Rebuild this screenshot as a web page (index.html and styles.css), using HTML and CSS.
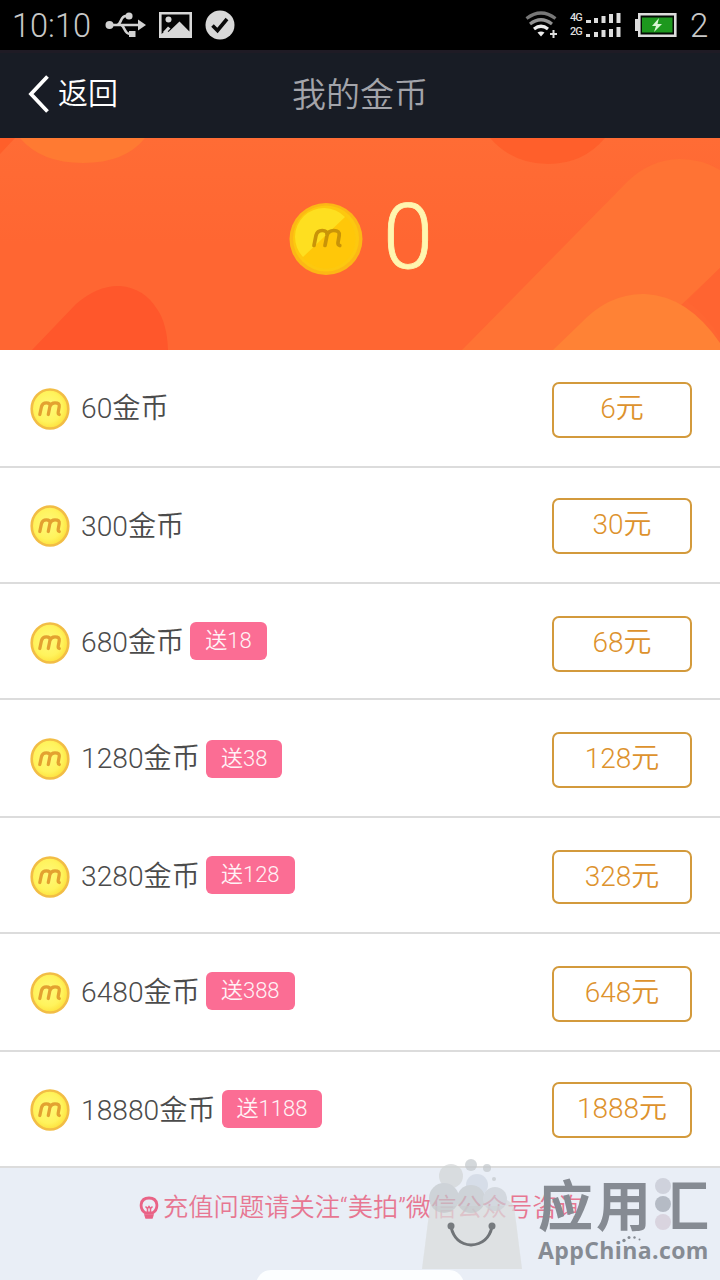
FILE: index.html
```html
<!DOCTYPE html>
<html lang="zh-CN">
<head>
<meta charset="utf-8">
<title>我的金币</title>
<link rel="stylesheet" href="styles.css">
</head>
<body>
<svg class="defs" width="0" height="0" aria-hidden="true">
  <defs>
    <radialGradient id="coin-fill" cx=".45" cy=".45" r=".55">
      <stop offset="0" stop-color="#fff97a"/>
      <stop offset=".7" stop-color="#fff35c"/>
      <stop offset="1" stop-color="#fde23e"/>
    </radialGradient>
    <symbol id="coin" viewBox="0 0 40 42">
      <ellipse cx="20" cy="21" rx="18.300" ry="19.500" fill="url(#coin-fill)" stroke="#f2bd45" stroke-width="2.600"/>
      <path d="M9.800 26.500L11.500 18.500Q12.500 14.800 16.300 14.800Q20.600 14.800 19.900 18.500L18.300 26.500M19.900 18.500Q21 14.800 25 14.800Q29.900 14.800 29.200 18.800L28.200 24.200Q28 26.200 29.300 26.500" fill="none" stroke="#e3a130" stroke-width="3.300" stroke-linecap="round" stroke-linejoin="round"/>
    </symbol>
  </defs>
</svg>
<div class="screen">
  <header class="status">
    <span class="clock">10:10</span>
    <svg class="usb" width="42" height="28" viewBox="0 0 42 28" fill="none" stroke="#d2d2d2" stroke-width="2.600">
      <path d="M5 14h29M12 14C17 13 15 5 21 5h4M16 14c4 1 3 9 9 9"/>
      <g fill="#d2d2d2" stroke="none"><circle cx="4.500" cy="14" r="4"/><circle cx="24" cy="5" r="3.600"/><path d="M33 8.500L41 14l-8 5.500zM24 20h6.500v6H24z"/></g>
    </svg>
    <svg class="photo" width="33" height="26" viewBox="0 0 33 26">
      <path d="M0 0h33v26H0z" fill="#d8d8d8"/><path d="M2.600 2.600h27.800v17L20.500 9.500 9.500 20l-2.500-2-4.400 4z" fill="#050505"/><path d="M4 20l5-5.500 2.500 2L8 20z" fill="#d8d8d8"/><circle cx="9.500" cy="7.500" r="3" fill="#d8d8d8"/>
    </svg>
    <svg class="check" width="30" height="30" viewBox="0 0 30 30"><circle cx="15" cy="15" r="14.500" fill="#d8d8d8"/><path d="M7.500 15.500l5 5L22 9" fill="none" stroke="#090909" stroke-width="3.600"/></svg>
    <svg class="wifi" width="34" height="28" viewBox="0 0 34 28" fill="none" stroke-width="3.200">
      <path d="M1.500 7.500q14.500-11 29 0" stroke="#777"/><path d="M5 13q11-8.500 22 0" stroke="#929292"/><path d="M9 18q7-5.500 14 0" stroke="#eee"/>
      <path d="M12.500 21.500q3.500-2 7 0L16 25.500z" fill="#eee" stroke="none"/><path d="M28.500 19v8M25 23h7" stroke="#ddd" stroke-width="2"/>
    </svg>
    <div class="signals">
      <div class="signal"><span>4G</span><svg width="35" height="12" viewBox="0 0 35 12" fill="#ddd"><path d="M0 8h5v3H0zM8 6h4v5H8zM15.500 4h4v7h-4zM23 2h4v9h-4zM30.500 1h4v10h-4z"/></svg></div>
      <div class="signal"><span>2G</span><svg width="35" height="12" viewBox="0 0 35 12" fill="#ddd"><path d="M0 8h4v3H0zM8 6h4v5H8zM15.500 4h4v7h-4zM23 3h4v8h-4zM30.500 1h4v10h-4z"/></svg></div>
    </div>
    <svg class="battery" width="42" height="24" viewBox="0 0 42 24"><path d="M0 6h4v12H0z" fill="#ddd"/><path d="M4.300 1.300h36v21.400h-36z" fill="#040a04" stroke="#ddd" stroke-width="2.600"/><path d="M7 4.500h30.500v15H7z" fill="#1d981e"/><path d="M24 5l-7 8h4l-2 6 8-8h-4.500z" fill="#d9f5d5"/></svg>
    <span class="level">2</span>
  </header>
  <nav class="nav">
    <svg class="back-icon" width="22" height="40" viewBox="0 0 22 40"><path d="M19.500 2.500L3 20l16.500 17.500" fill="none" stroke="#fff" stroke-width="3.800"/></svg>
    <span class="back">返回</span>
    <h1 class="title">我的金币</h1>
  </nav>
  <section class="hero">
    <svg class="hero-art" width="720" height="212" viewBox="0 0 720 212" aria-hidden="true">
      <path d="M0 0h15L0 16z" fill="#ff5f2a"/>
      <path d="M20 0h125q-20 25-62 25T20 0z" fill="#ff7a32"/>
      <path d="M490 0h115q-22 26-57 26T490 0z" fill="#ff5f2b"/>
      <path d="M462 212L628 43q22-21 51-22 23 0 41 11v98l-86 82z" fill="#ff7334"/>
      <path d="M553 212l27-26q29-31 65-30 43 2 75 49v7z" fill="#ff8235"/>
      <path d="M720 130l-33 33q22 16 33 37z" fill="#ff6431"/>
      <path d="M32 212l44-46q22-19 44-18 24 2 37 23 10 14 11 41z" fill="#ff572b"/>
    </svg>
    <div class="balance">
      <svg class="big-coin" width="74" height="74" viewBox="0 0 74 74">
        <ellipse cx="37" cy="37" rx="36.500" ry="36" fill="#fcb715"/>
        <circle cx="37" cy="36.500" r="33" fill="#fdc80f"/>
        <circle cx="37" cy="37" r="29.500" fill="#ffc709"/>
        <path d="M14 55A29 29 0 0 1 56 15z" fill="#fedf20"/>
        <path d="M25 43.500L27 33.500Q28.300 28.500 33.200 28.500Q38.800 28.500 38 33.500L36 43.500M38 33.500Q39.500 28.500 44.800 28.500Q51 28.500 50.200 33.500L49 40.500Q48.700 43 50.800 43.500" fill="none" stroke="#c99408" stroke-width="3.700" stroke-linecap="round" stroke-linejoin="round"/>
      </svg>
      <span class="amount">0</span>
    </div>
  </section>
  <main class="list">
    <div class="row tall"><svg class="coin"><use href="#coin"/></svg><span class="name">60金币</span><button class="price">6元</button></div>
    <div class="row raised"><svg class="coin"><use href="#coin"/></svg><span class="name">300金币</span><button class="price">30元</button></div>
    <div class="row"><svg class="coin"><use href="#coin"/></svg><span class="name">680金币</span><span class="bonus">送18</span><button class="price">68元</button></div>
    <div class="row tall"><svg class="coin"><use href="#coin"/></svg><span class="name">1280金币</span><span class="bonus low">送38</span><button class="price">128元</button></div>
    <div class="row"><svg class="coin"><use href="#coin"/></svg><span class="name">3280金币</span><span class="bonus">送128</span><button class="price short">328元</button></div>
    <div class="row tall"><svg class="coin"><use href="#coin"/></svg><span class="name">6480金币</span><span class="bonus">送388</span><button class="price">648元</button></div>
    <div class="row raised"><svg class="coin"><use href="#coin"/></svg><span class="name">18880金币</span><span class="bonus low">送1188</span><button class="price">1888元</button></div>
  </main>
  <footer class="footer">
    <div class="help">
      <svg width="20" height="25" viewBox="0 0 20 25" fill="none" stroke="#e96386"><path d="M6.500 17C0 13 .5 2 10 2s10 11 3.500 15z" stroke-width="2.800"/><path d="M6.500 10.500l2 2 1.500-2 1.500 2 2-2M8.500 13v4M11.500 13v4" stroke-width="1.500"/><path d="M6 19h8l-1 3H7z" fill="#e96386" stroke-width="1.500"/></svg>
      <span>充值问题请关注“美拍”微信公众号咨询</span>
    </div>
    <div class="sheet"></div>
    <div class="watermark">
      <svg class="bag" width="100" height="112" viewBox="0 0 100 112">
        <path d="M8 47h84l8 63H0z" fill="#d9dcdc" opacity=".75"/>
        <g fill="#c3c8cc" opacity=".7"><circle cx="29" cy="17" r="12" fill="#d2d5d6"/><circle cx="49" cy="6" r="6"/><circle cx="65" cy="9" r="4"/><circle cx="72" cy="20" r="2"/><circle cx="55" cy="26" r="11" fill="#cfd7e3"/><path d="M8 47q4-8 14-9h52q12 1 18 9z" fill="#d5d8da"/><circle cx="22" cy="39" r="15"/><circle cx="49" cy="40" r="14"/><circle cx="73" cy="40" r="12" fill="#cbd0d6"/></g>
        <path d="M29 68q4 17 20 18 17-1 21-18" fill="none" stroke="#707478" stroke-width="3"/><g fill="#777b7f"><circle cx="29" cy="67" r="3.500"/><circle cx="70" cy="67" r="3.500"/></g>
      </svg>
      <div class="brand">
        <div class="brand-cn"><span>应</span><span>用</span><span class="hui"><span class="hui-text">汇</span><svg class="dots" width="18" height="54" viewBox="0 0 18 54"><circle cx="9" cy="9" r="8" fill="#cfd2dc"/><circle cx="9" cy="27" r="8" fill="#b5bbc5"/><circle cx="9" cy="45" r="8" fill="#d9d4df"/></svg></span></div>
        <div class="brand-en">AppChina.com<svg class="spark" width="22" height="8" viewBox="0 0 22 8" fill="#868b93"><circle cx="3" cy="5.500" r="1.700"/><circle cx="8" cy="2.500" r="1.500"/><circle cx="13.500" cy="2.500" r="1.200"/><circle cx="18.500" cy="4.500" r="1"/></svg></div>
      </div>
    </div>
  </footer>
</div>
</body>
</html>
```

FILE: styles.css
```css
* { box-sizing: border-box; }
body { margin: 0; background: #e9eef6; }
.defs { position: absolute; }
.screen {
  width: 720px; height: 1280px; overflow: hidden;
  display: flex; flex-direction: column;
  font-family: Roboto, "Noto Sans CJK SC", sans-serif;
  font-weight: 350; white-space: nowrap;
}
svg { display: block; flex: none; }

.status {
  height: 50px; background: #000; color: #c8c8c8; font-weight: 300;
  display: flex; align-items: center; padding: 0 12px;
}
.clock { font-size: 32.500px; line-height: 50px; width: 93px; padding-top: 2px; }
.usb { margin-right: 12px; }
.photo { margin-right: 13px; }
.wifi { margin-left: auto; margin-right: 11px; }
.signals { display: flex; flex-direction: column; gap: 2px; margin-right: 14px; }
.signal { display: flex; align-items: center; font-size: 11px; line-height: 12px; font-weight: 500; color: #ddd; }
.signal span { width: 16px; letter-spacing: -1px; }
.battery { margin-right: 13px; }
.level { font-size: 33px; line-height: 50px; padding-top: 2px; width: 18px; }

.nav {
  height: 88px; background: #181c25; border-top: 3px solid #1f1b25;
  display: grid; grid-template-columns: 30px 234px 192px 1fr; align-items: center;
  padding: 0 0 4px 28px; color: #fff;
}
.back { font-size: 30px; line-height: 40px; }
.title { margin: 0; padding-top: 2px; font-size: 34px; line-height: 44px; font-weight: 350; color: #a3a4aa; }

.hero { height: 212px; background: linear-gradient(#ff6c35, #ff6632 50%); display: grid; }
.hero-art, .balance { grid-area: 1 / 1; }
.balance { display: flex; align-items: flex-start; padding: 64px 0 0 289px; }
.amount { font-size: 90px; line-height: 71px; margin-left: 20px; color: #fff6b0; -webkit-text-stroke: .8px #fff6b0; }

.list { background: #fff; }
.row {
  height: 116px; padding: 32px 28px 0 30px; border-bottom: 2px solid #dcdcdc;
  display: flex; align-items: flex-start; color: #4b4b4b;
}
.row.tall { height: 118px; }
.row.raised { padding-top: 30px; }
.coin { width: 40px; height: 42px; margin: 6px 11px 0 0; }
.raised .coin { margin-top: 7px; }
.name { font-size: 28.200px; line-height: 53px; }
.raised .name { line-height: 57px; }
.bonus {
  margin: 6px 0 0 6px; height: 38px; padding: 0 15px; border-radius: 6px;
  background: #fb6d94; color: #fff3f6; font-size: 22px; line-height: 37px;
}
.bonus.low { margin-top: 8px; }
.price {
  margin: 0 0 0 auto; width: 140px; height: 56px; padding: 0 0 3px;
  border: 2px solid #d39a3c; border-radius: 7px; background: #fff;
  color: #dd922d; font: inherit; font-size: 28px; line-height: 49px;
}
.price.short { height: 54px; }

.footer { flex: 1; background: #e9eef6; position: relative; }
.help { display: flex; align-items: center; gap: 4px; padding: 21px 0 0 139px; color: #e77792; font-size: 25.300px; line-height: 38px; }
.sheet { position: absolute; left: 256px; top: 102px; width: 208px; height: 30px; border-radius: 16px; background: #fcfeff; }
.watermark { position: absolute; left: 422px; top: -9px; display: flex; align-items: flex-start; }
.brand { padding: 12px 0 0 16px; color: #868b93; }
.brand-cn { display: flex; font: 700 55px/62px "Noto Sans CJK SC", sans-serif; }
.brand-cn > span { width: 58px; }
.hui { position: relative; }
.hui-text { display: block; width: 55px; clip-path: inset(0 0 0 18px); }
.dots { position: absolute; left: 0; top: 6px; }
.brand-en { position: relative; font: 700 23px/26px "Open Sans", sans-serif; letter-spacing: .4px; margin-top: 4px; }
.spark { position: absolute; left: 83px; top: -2px; }
```
